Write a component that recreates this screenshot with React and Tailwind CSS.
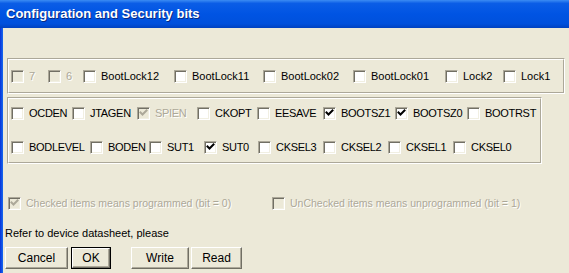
import React from "react";

const row1 = [
  { label: "7", w: "w-[37px]", disabled: true },
  { label: "6", w: "w-[35px]", disabled: true },
  { label: "BootLock12", w: "w-[91px]" },
  { label: "BootLock11", w: "w-[89px]" },
  { label: "BootLock02", w: "w-[90px]" },
  { label: "BootLock01", w: "w-[92px]" },
  { label: "Lock2", w: "w-[58px]" },
  { label: "Lock1", w: "w-[50px]" },
];

const row2 = [
  { label: "OCDEN", w: "w-[61px]" },
  { label: "JTAGEN", w: "w-[65px]" },
  { label: "SPIEN", w: "w-[60px]", checked: true, disabled: true },
  { label: "CKOPT", w: "w-[60px]" },
  { label: "EESAVE", w: "w-[66px]" },
  { label: "BOOTSZ1", w: "w-[72px]", checked: true },
  { label: "BOOTSZ0", w: "w-[72px]", checked: true },
  { label: "BOOTRST", w: "w-[70px]" },
];

const row3 = [
  { label: "BODLEVEL", w: "w-[79px]" },
  { label: "BODEN", w: "w-[59px]" },
  { label: "SUT1", w: "w-[55px]" },
  { label: "SUT0", w: "w-[54px]", checked: true },
  { label: "CKSEL3", w: "w-[65px]" },
  { label: "CKSEL2", w: "w-[65px]" },
  { label: "CKSEL1", w: "w-[65px]" },
  { label: "CKSEL0", w: "w-[65px]" },
];

const CheckBox = ({ checked, disabled }) => (
  <span
    className={
      disabled
        ? "relative w-[13px] h-[13px] shrink-0 border border-t-[#ACA899] border-l-[#ACA899] border-r-white border-b-white bg-[#ECE9D8] shadow-[inset_1px_1px_0_#716F64,inset_-1px_-1px_0_#F1EFE2]"
        : "relative w-[13px] h-[13px] shrink-0 border border-t-[#ACA899] border-l-[#ACA899] border-r-white border-b-white bg-white shadow-[inset_1px_1px_0_#716F64,inset_-1px_-1px_0_#F1EFE2]"
    }
  >
    {checked && (
      <svg viewBox="0 0 11 11" className="absolute inset-0 w-[11px] h-[11px]">
        <path
          d="M2.5 4.5 L4.5 6.5 L8.5 2.5"
          fill="none"
          stroke={disabled ? "#ACA899" : "#000"}
          strokeWidth="2"
          strokeLinecap="square"
        />
      </svg>
    )}
  </span>
);

const Item = ({ label, w, checked, disabled, caps }) => (
  <div className={`flex items-center gap-[5px] shrink-0 ${w}`}>
    <CheckBox checked={checked} disabled={disabled} />
    <span
      className={`text-[11px] leading-[13px] whitespace-nowrap ${
        caps ? "tracking-[-0.3px]" : ""
      } ${disabled ? "text-[#ACA899] [text-shadow:1px_1px_0_#fff]" : "text-black"}`}
    >
      {label}
    </span>
  </div>
);

// etched group box: grey outer top/left, white inner
const GroupBox = ({ className, children }) => (
  <div
    className={`border border-t-[#ACA899] border-l-[#ACA899] border-r-white border-b-white ${className}`}
  >
    <div className="h-full border border-t-white border-l-white border-r-[#ACA899] border-b-[#ACA899]">
      {children}
    </div>
  </div>
);

const Button = ({ children, w, isDefault }) =>
  isDefault ? (
    <div className={`border border-black h-[22px] ${w}`}>
      <div className="h-full flex items-center justify-center border border-t-white border-l-white border-r-[#716F64] border-b-[#716F64] shadow-[inset_-1px_-1px_0_#ACA899] text-[12px]">
        {children}
      </div>
    </div>
  ) : (
    <div
      className={`h-[22px] flex items-center justify-center border border-t-white border-l-white border-r-[#716F64] border-b-[#716F64] shadow-[inset_-1px_-1px_0_#ACA899] text-[12px] ${w}`}
    >
      {children}
    </div>
  );

export default function App() {
  return (
    <div className="w-[569px] h-[273px] bg-[#ECE9D8] flex flex-col overflow-hidden font-['Liberation_Sans',Arial,sans-serif] text-black">
      {/* title bar */}
      <div className="h-[28px] shrink-0 flex items-center pl-[6px] bg-[linear-gradient(180deg,#3C8CF3_0%,#0B5DE6_12%,#0054E3_50%,#0050DC_85%,#0041C0_100%)]">
        <span className="text-white font-bold text-[13px] [text-shadow:1px_1px_0_#0A2A80]">
          Configuration and Security bits
        </span>
      </div>

      <div className="flex flex-1">
        <div className="w-[3px] bg-[linear-gradient(90deg,#0831D9,#166AEE)]" />
        <div className="flex-1 flex flex-col pl-[2px] pt-[30px]">
          <GroupBox className="ml-[2px] w-[558px] h-[36px]">
            <div className="h-full flex items-center pl-[2px]">
              {row1.map((it) => (
                <Item key={it.label} {...it} />
              ))}
            </div>
          </GroupBox>

          <GroupBox className="ml-[2px] mt-[3px] w-[535px] h-[67px]">
            <div className="h-full flex flex-col justify-center gap-[21px] pl-[2px]">
              <div className="flex items-center h-[13px]">
                {row2.map((it) => (
                  <Item key={it.label} caps {...it} />
                ))}
              </div>
              <div className="flex items-center h-[13px]">
                {row3.map((it) => (
                  <Item key={it.label} caps {...it} />
                ))}
              </div>
            </div>
          </GroupBox>

          <div className="flex items-center h-[13px] mt-[33px] ml-[3px]">
            <div className="flex items-center gap-[5px] w-[264px]">
              <CheckBox checked disabled />
              <span className="text-[10.5px] leading-[13px] text-[#ACA899] [text-shadow:1px_1px_0_#fff] whitespace-nowrap">
                Checked items means programmed (bit = 0)
              </span>
            </div>
            <div className="flex items-center gap-[5px]">
              <CheckBox disabled />
              <span className="text-[10.5px] leading-[13px] text-[#ACA899] [text-shadow:1px_1px_0_#fff] whitespace-nowrap">
                UnChecked items means unprogrammed (bit = 1)
              </span>
            </div>
          </div>

          <div className="mt-[17px] h-[13px] text-[11px] leading-[13px]">
            Refer to device datasheet, please
          </div>

          <div className="flex mt-[7px]">
            <Button w="w-[63px]">Cancel</Button>
            <div className="ml-[3px]">
              <Button w="w-[40px]" isDefault>
                OK
              </Button>
            </div>
            <div className="ml-[20px]">
              <Button w="w-[58px]">Write</Button>
            </div>
            <div className="ml-[2px]">
              <Button w="w-[51px]">Read</Button>
            </div>
          </div>
        </div>
      </div>
    </div>
  );
}
